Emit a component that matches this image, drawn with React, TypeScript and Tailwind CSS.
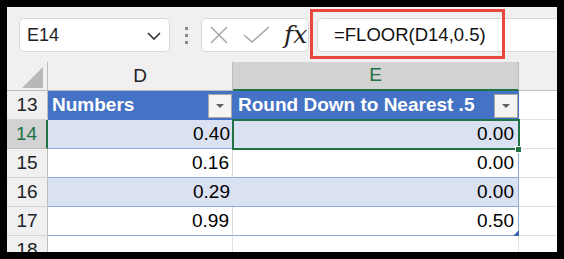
import React from "react";

const font = { fontFamily: '"Liberation Sans", Arial, sans-serif' };

function FilterBtn() {
  return (
    <div className="w-[24px] h-[24px] bg-[#f4f4f4] border border-[#a9a9a9] flex items-center justify-center box-border">
      <svg width="10" height="6" viewBox="0 0 10 6">
        <polygon points="1,1 9,1 5,5" fill="#5f5f5f" />
      </svg>
    </div>
  );
}

function RowHead({ n, selected }: { n: number; selected?: boolean }) {
  return (
    <div
      className={
        "w-[41px] h-[29px] shrink-0 box-border border-b flex items-center justify-center text-[19px] " +
        (selected
          ? "bg-[#d2d2d2] text-[#217346] border-b-[#bdbdbd] border-r-2 border-r-[#217346]"
          : "bg-[#f0f0f0] text-[#222] border-b-[#d4d4d4] border-r border-r-[#bdbdbd]")
      }
    >
      {n}
    </div>
  );
}

function DataRow({ n, d, e, band, selected }: { n: number; d: string; e: string; band: boolean; selected?: boolean }) {
  return (
    <div className="flex h-[29px]">
      <RowHead n={n} selected={selected} />
      <div
        className={
          "w-[185px] h-[29px] box-border border-b border-b-[#8ea9db] flex items-center justify-end pr-[3px] text-[19px] text-black " +
          (band ? "bg-[#d9e1f2]" : "bg-white border-r border-r-[#d9d9d9]")
        }
      >
        {d}
      </div>
      <div
        className={
          "w-[286px] h-[29px] box-border border-b border-b-[#8ea9db] border-r border-r-[#8ea9db] flex items-center justify-end pr-[4px] text-[19px] text-black " +
          (band ? "bg-[#d9e1f2]" : "bg-white")
        }
      >
        {e}
      </div>
      <div className="w-[38px] h-[29px] box-border border-b border-b-[#e1e1e1] bg-white" />
    </div>
  );
}

export default function App() {
  return (
    <div className="w-[564px] h-[259px] bg-black p-[7px] box-border" style={font}>
      <div className="w-[550px] h-[245px] bg-[#f0f0f0] overflow-hidden relative flex flex-col">
        {/* Toolbar */}
        <div className="h-[55px] shrink-0 flex items-start pt-[11px] pl-[12px] relative">
          <div className="w-[151px] h-[34px] box-border rounded-[5px] bg-white border border-[#d8d8d8] flex items-center justify-between pl-[7px] pr-[7px]">
            <span className="text-[18px] text-[#222] leading-none">E14</span>
            <svg width="16" height="10" viewBox="0 0 16 10" className="mt-[1px]">
              <polyline points="2,2 8,8 14,2" fill="none" stroke="#333" strokeWidth="1.6" />
            </svg>
          </div>
          <div className="ml-[15px] mt-[9px] flex flex-col gap-[4px]">
            <div className="w-[3px] h-[3px] bg-[#8a8a8a]" />
            <div className="w-[3px] h-[3px] bg-[#8a8a8a]" />
            <div className="w-[3px] h-[3px] bg-[#8a8a8a]" />
          </div>
          <div className="ml-[13px] w-[108px] h-[34px] box-border rounded-[5px] bg-white border border-[#d8d8d8] flex items-center pl-[8px]">
            <svg width="18" height="18" viewBox="0 0 18 18">
              <line x1="1" y1="1" x2="17" y2="17" stroke="#a3a3a3" strokeWidth="1.4" />
              <line x1="17" y1="1" x2="1" y2="17" stroke="#a3a3a3" strokeWidth="1.4" />
            </svg>
            <svg width="27" height="18" viewBox="0 0 27 18" className="ml-[15px]">
              <polyline points="1,9 9,16 26,1" fill="none" stroke="#a3a3a3" strokeWidth="1.4" />
            </svg>
            <span
              className="ml-[14px] text-[25px] italic text-[#222] leading-none -mt-[2px]"
              style={{ fontFamily: '"DejaVu Serif", "Liberation Serif", serif' }}
            >
              fx
            </span>
          </div>
          <div className="ml-[8px] flex-1 h-[34px] box-border rounded-l-[5px] bg-white border border-r-0 border-[#d8d8d8] flex items-center pl-[16px]">
            <span className="text-[18.5px] text-[#111] leading-none">=FLOOR(D14,0.5)</span>
          </div>
          <div className="absolute left-[303px] top-[2px] w-[195px] h-[50px] border-[3px] border-[#e8473d] box-border" />
        </div>

        {/* Grid */}
        <div className="relative flex flex-col bg-white">
          {/* Column headers */}
          <div className="flex h-[29px]">
            <div className="w-[41px] h-[29px] box-border bg-[#f0f0f0] border-r border-b border-[#bdbdbd] relative">
              <svg width="21" height="21" viewBox="0 0 21 21" className="absolute left-[15px] top-[5px]">
                <polygon points="21,0 21,21 0,21" fill="#b8b8b8" />
              </svg>
            </div>
            <div className="w-[185px] h-[29px] box-border bg-[#f0f0f0] border-r border-b border-[#bdbdbd] flex items-center justify-center text-[19px] text-[#222]">
              D
            </div>
            <div className="w-[286px] h-[29px] box-border bg-[#d2d2d2] border-r border-r-[#bdbdbd] border-b-2 border-b-[#217346] flex items-center justify-center text-[19px] text-[#217346]">
              E
            </div>
            <div className="w-[38px] h-[29px] box-border bg-[#f0f0f0] border-b border-[#bdbdbd]" />
          </div>

          {/* Row 13: table header */}
          <div className="flex h-[29px]">
            <RowHead n={13} />
            <div className="w-[185px] h-[29px] box-border bg-[#4472c4] flex items-center justify-between pl-[4px] pr-[1px]">
              <span className="text-[19px] font-bold text-white">Numbers</span>
              <FilterBtn />
            </div>
            <div className="w-[286px] h-[29px] box-border bg-[#4472c4] flex items-center justify-between pl-[5px] pr-[1px]">
              <span className="text-[19px] font-bold text-white">Round Down to Nearest .5</span>
              <FilterBtn />
            </div>
            <div className="w-[38px] h-[29px] box-border border-b border-b-[#e1e1e1] bg-white" />
          </div>

          <DataRow n={14} d="0.40" e="0.00" band selected />
          <DataRow n={15} d="0.16" e="0.00" band={false} />
          <DataRow n={16} d="0.29" e="0.00" band />
          <DataRow n={17} d="0.99" e="0.50" band={false} />
          <div className="flex h-[29px]">
            <RowHead n={18} />
            <div className="w-[185px] h-[29px] box-border bg-white border-r border-r-[#e1e1e1]" />
            <div className="w-[286px] h-[29px] box-border bg-white border-r border-r-[#e1e1e1]" />
            <div className="w-[38px] h-[29px] bg-white" />
          </div>

          {/* Selection overlay */}
          <div className="absolute left-[225px] top-[57px] w-[288px] h-[31px] border-2 border-[#217346] box-border pointer-events-none" />
          <div className="absolute left-[508px] top-[84px] w-[7px] h-[7px] bg-[#217346] border border-white box-border" />
          {/* Table resize handle */}
          <svg width="6" height="6" viewBox="0 0 6 6" className="absolute left-[506px] top-[168px]">
            <polygon points="6,0 6,6 0,6" fill="#3f63b0" />
          </svg>
        </div>
      </div>
    </div>
  );
}
